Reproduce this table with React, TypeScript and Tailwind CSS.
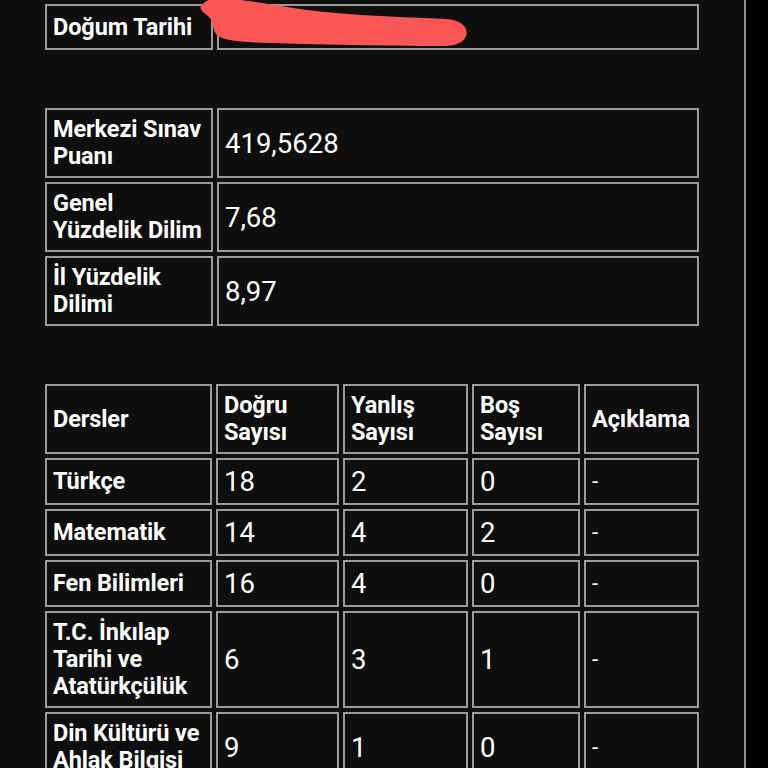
import React from 'react';

interface ScoreRow {
  label: string[];
  value: string;
}

interface LessonRow {
  name: string[];
  dogru: string;
  yanlis: string;
  bos: string;
  aciklama: string;
}

const scores: ScoreRow[] = [
  { label: ['Merkezi Sınav', 'Puanı'], value: '419,5628' },
  { label: ['Genel', 'Yüzdelik Dilim'], value: '7,68' },
  { label: ['İl Yüzdelik', 'Dilimi'], value: '8,97' },
];

const lessons: LessonRow[] = [
  { name: ['Türkçe'], dogru: '18', yanlis: '2', bos: '0', aciklama: '-' },
  { name: ['Matematik'], dogru: '14', yanlis: '4', bos: '2', aciklama: '-' },
  { name: ['Fen Bilimleri'], dogru: '16', yanlis: '4', bos: '0', aciklama: '-' },
  { name: ['T.C. İnkılap', 'Tarihi ve', 'Atatürkçülük'], dogru: '6', yanlis: '3', bos: '1', aciklama: '-' },
  { name: ['Din Kültürü ve', 'Ahlak Bilgisi'], dogru: '9', yanlis: '1', bos: '0', aciklama: '-' },
];

const cell = 'border-2 border-[#9a9a9a] px-[6px] py-[6px] align-middle';
const labelText = 'font-bold text-[23.5px] leading-[27px] text-white tracking-[-0.1px]';
const valueText = 'text-[27.5px] leading-[27px] text-white';

function Lines({ lines }: { lines: string[] }) {
  return (
    <>
      {lines.map((l, i) => (
        <div key={i} className="whitespace-nowrap">
          {l}
        </div>
      ))}
    </>
  );
}

function Scribble() {
  // red marker stroke hiding the birth date
  return (
    <svg className="absolute left-0 top-0 pointer-events-none" width="768" height="60" viewBox="0 0 768 60">
      <path
        d="M204 3 C212 -7 262 3 300 9 C340 15 400 17 446 19 C473 20 474 45 446 46 C400 46 330 45 268 43 C238 42 220 40 216 34 C212 28 214 21 208 16 C200 11 198 6 204 3 Z"
        fill="#fb5656"
      />
    </svg>
  );
}

export default function App() {
  return (
    <div className="min-h-[768px] bg-black" style={{ fontFamily: 'Roboto, "Noto Sans", sans-serif' }}>
      <div className="relative w-[746px] min-h-[768px] bg-[#0e0e0e] border-r-2 border-[#8c8c8c] pl-[41px] overflow-hidden">
        {/* Doğum tarihi */}
        <table className="border-separate border-spacing-[4px] w-[662px] table-fixed">
          <colgroup>
            <col className="w-[168px]" />
            <col />
          </colgroup>
          <tbody>
            <tr>
              <td className={`${cell} h-[46px] ${labelText}`}>
                <Lines lines={['Doğum Tarihi']} />
              </td>
              <td className={`${cell} ${valueText}`}></td>
            </tr>
          </tbody>
        </table>

        {/* Puanlar */}
        <table className="mt-[50px] border-separate border-spacing-[4px] w-[662px] table-fixed">
          <colgroup>
            <col className="w-[168px]" />
            <col />
          </colgroup>
          <tbody>
            {scores.map((s) => (
              <tr key={s.value}>
                <td className={`${cell} h-[70px] ${labelText}`}>
                  <Lines lines={s.label} />
                </td>
                <td className={`${cell} ${valueText}`}>{s.value}</td>
              </tr>
            ))}
          </tbody>
        </table>

        {/* Dersler */}
        <table className="mt-[50px] border-separate border-spacing-[4px] w-[662px] table-fixed">
          <colgroup>
            <col className="w-[167px]" />
            <col className="w-[123px]" />
            <col className="w-[125px]" />
            <col className="w-[108px]" />
            <col />
          </colgroup>
          <thead>
            <tr>
              <th className={`${cell} h-[70px] text-left ${labelText}`}>Dersler</th>
              <th className={`${cell} text-left ${labelText}`}>
                <Lines lines={['Doğru', 'Sayısı']} />
              </th>
              <th className={`${cell} text-left ${labelText}`}>
                <Lines lines={['Yanlış', 'Sayısı']} />
              </th>
              <th className={`${cell} text-left ${labelText}`}>
                <Lines lines={['Boş', 'Sayısı']} />
              </th>
              <th className={`${cell} text-left ${labelText}`}>
                <Lines lines={['Açıklama']} />
              </th>
            </tr>
          </thead>
          <tbody>
            {lessons.map((l) => (
              <tr key={l.name.join(' ')}>
                <td className={`${cell} h-[47px] ${labelText}`}>
                  <Lines lines={l.name} />
                </td>
                <td className={`${cell} ${valueText}`}>{l.dogru}</td>
                <td className={`${cell} ${valueText}`}>{l.yanlis}</td>
                <td className={`${cell} ${valueText}`}>{l.bos}</td>
                <td className={`${cell} text-[22px] leading-[27px] text-white`}>{l.aciklama}</td>
              </tr>
            ))}
          </tbody>
        </table>

        <Scribble />
      </div>
    </div>
  );
}
